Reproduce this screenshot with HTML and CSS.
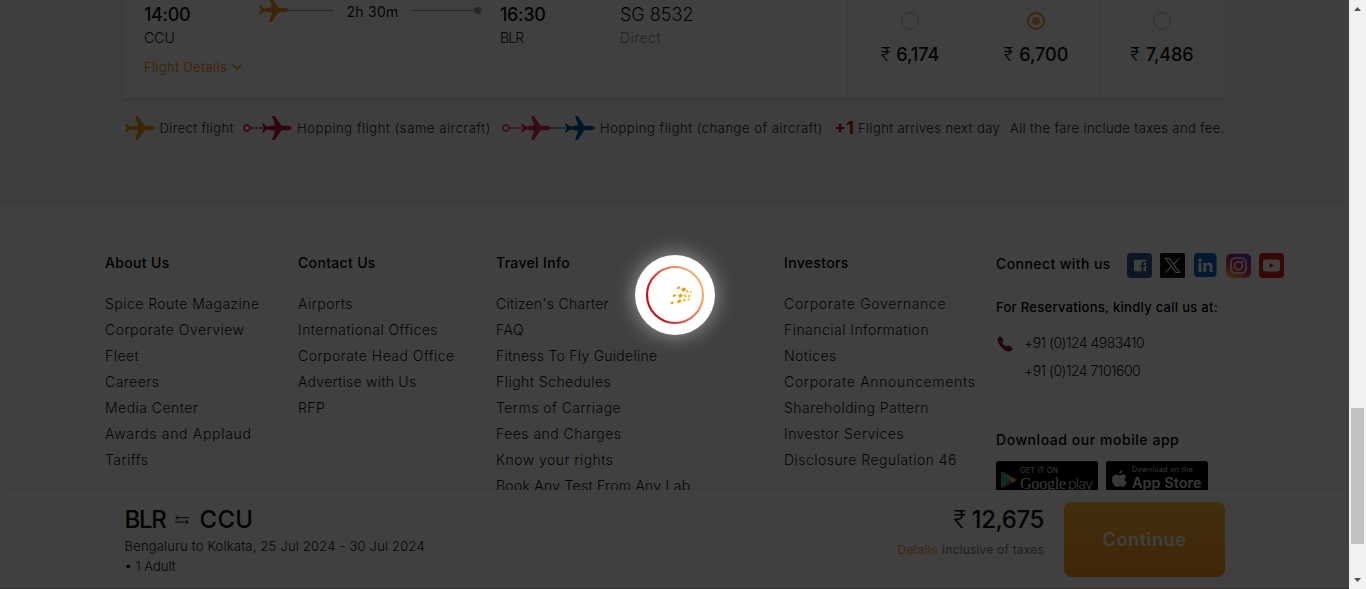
FILE: index.html
```html
<!DOCTYPE html>
<html lang="en">
<head>
<meta charset="utf-8">
<title>Select your flight</title>
<link rel="stylesheet" href="styles.css">
</head>
<body>
<svg class="defs" width="0" height="0">
  <defs>
    <symbol id="plane" viewBox="0 0 30 24"><path d="M30 12c0-1.100-2.500-2.300-5-2.300h-5.500L12.800 0h-2.700l3 9.200L5 10.500 1.500 7.500H0L1.600 12 0 16.500h1.500L5 13.500l8.100 1.300L10.100 24h2.700l6.700-9.700H25c2.500 0 5-1.200 5-2.300z"/></symbol>
  </defs>
</svg>
<div class="screen">
  <div class="page">
    <main class="results">
      <section class="card">
        <div class="leg">
          <div class="stop depart">
            <div class="time">14:00</div>
            <div class="code">CCU</div>
            <a class="details">Flight Details <svg width="10" height="6" viewBox="0 0 10 6"><path d="M.7.700 5 4.900 9.300.7" fill="none" stroke="currentColor" stroke-width="1.700"/></svg></a>
          </div>
          <div class="route">
            <svg class="orange" width="30" height="24"><use href="#plane"/></svg>
            <i class="line first"></i>
            <span class="duration">2h 30m</span>
            <i class="line last"></i>
            <i class="dot"></i>
          </div>
          <div class="stop arrive">
            <div class="time">16:30</div>
            <div class="code tight">BLR</div>
          </div>
          <div class="stop number">
            <div class="flightno">SG 8532</div>
            <div class="code muted">Direct</div>
          </div>
        </div>
        <div class="fares">
          <div class="fare"><i class="radio"></i><div class="amount"><span class="rupee">₹</span> 6,174</div></div>
          <div class="fare"><i class="radio on"></i><div class="amount"><span class="rupee">₹</span> 6,700</div></div>
          <div class="fare shaded"><i class="radio"></i><div class="amount"><span class="rupee">₹</span> 7,486</div></div>
        </div>
      </section>
      <div class="legend">
        <div class="key"><svg class="orange" width="30" height="24"><use href="#plane"/></svg><span>Direct flight</span></div>
        <div class="key wide"><svg width="49" height="24" viewBox="0 0 49 24"><g fill="none" stroke="#d7182a"><circle cx="4" cy="12" r="3" stroke-width="1.500"/><path d="M8 12h12" stroke-width="1.300" stroke-dasharray="3 1"/></g><use href="#plane" x="19" width="30" height="24" fill="#c8102e"/></svg><span>Hopping flight (same aircraft)</span></div>
        <div class="key wide"><svg width="93" height="24" viewBox="0 0 93 24"><g fill="none"><circle cx="4" cy="12" r="3" stroke="#d9475a" stroke-width="1.500"/><path d="M8 12h12" stroke="#d9475a" stroke-width="1.300" stroke-dasharray="3 1"/><path d="M48 12h18" stroke="#0068b5" stroke-width="1.500" stroke-dasharray="3 1"/></g><use href="#plane" x="19" width="30" height="24" fill="#cd3048"/><use href="#plane" x="63" width="30" height="24" fill="#005a9e"/></svg><span>Hopping flight (change of aircraft)</span></div>
        <div class="key"><b class="plus">+1</b><span>Flight arrives next day</span></div>
        <div class="key"><span>All the fare include taxes and fee.</span></div>
      </div>
    </main>
    <footer class="footer">
      <div class="col">
        <h3>About Us</h3>
        <a>Spice Route Magazine</a><a>Corporate Overview</a><a>Fleet</a><a>Careers</a><a>Media Center</a><a class="loose">Awards and Applaud</a><a>Tariffs</a>
      </div>
      <div class="col">
        <h3>Contact Us</h3>
        <a>Airports</a><a>International Offices</a><a>Corporate Head Office</a><a class="snug">Advertise with Us</a><a>RFP</a>
      </div>
      <div class="col">
        <h3>Travel Info</h3>
        <a class="snug">Citizen's Charter</a><a>FAQ</a><a class="snug">Fitness To Fly Guideline</a><a>Flight Schedules</a><a>Terms of Carriage</a><a>Fees and Charges</a><a>Know your rights</a><a class="snug">Book Any Test From Any Lab</a>
      </div>
      <div class="col">
        <h3>Investors</h3>
        <a class="loose">Corporate Governance</a><a>Financial Information</a><a>Notices</a><a class="loose">Corporate Announcements</a><a>Shareholding Pattern</a><a>Investor Services</a><a>Disclosure Regulation 46</a>
      </div>
      <div class="connect">
        <div class="social">
          <h3>Connect with us</h3>
          <svg width="25" height="25" viewBox="0 0 25 25"><rect width="25" height="25" rx="4" fill="#3b5998"/><path d="M7 6.800h12v11.400h-2.500v-4.300h1.500l.2-1.800h-1.700V11c0-.6.200-.9.900-.9h.9V8.400h-1.400c-1.600 0-2.300.9-2.300 2.300v1.400h-1.200v1.800h1.200v4.300H7z" fill="#fff"/></svg>
          <svg width="25" height="25" viewBox="0 0 25 25"><rect width="25" height="25" rx="1.500" fill="#111"/><path d="M5.500 5.500h3.700l10.500 14H16z M19 5.500l-5.900 6.400M5.500 19.500l6-6.500" fill="none" stroke="#fff" stroke-width="1.100"/></svg>
          <svg width="25" height="25" viewBox="0 0 25 25"><rect x="1" width="22.500" height="24" rx="4" fill="#0a66c2"/><path d="M5.500 9.800h3V19h-3zM10.300 9.800h2.900v1.300c.6-1 1.600-1.600 3-1.600 2.400 0 3.300 1.500 3.300 4V19h-3v-5c0-1.200-.3-2.100-1.500-2.100-1.300 0-1.700.9-1.700 2.100v5h-3z" fill="#fff"/><circle cx="7" cy="7.200" r="1.700" fill="#fff"/></svg>
          <svg width="25" height="25" viewBox="0 0 25 25"><defs><linearGradient id="ig" x1=".2" y1="1" x2=".7" y2="0"><stop offset="0" stop-color="#fdc050"/><stop offset=".4" stop-color="#e03c50"/><stop offset=".75" stop-color="#a0288e"/><stop offset="1" stop-color="#5b34d0"/></linearGradient></defs><rect y=".7" width="25" height="24.300" rx="5" fill="url(#ig)"/><g fill="none" stroke="#fff" stroke-width="1.500"><rect x="5" y="5" width="15" height="15" rx="4.500"/><circle cx="12.500" cy="12.700" r="4"/></g><circle cx="16.800" cy="8.400" r="1" fill="#fff"/></svg>
          <svg width="25" height="25" viewBox="0 0 25 25"><rect width="25" height="25" rx="4" fill="#d4201c"/><rect x="4" y="6.500" width="17" height="12" rx="3" fill="#fff"/><path d="m10.500 10 4.500 2.500-4.500 2.500z" fill="#d4201c"/></svg>
        </div>
        <h4>For Reservations, kindly call us at:</h4>
        <div class="phones">
          <svg width="16" height="16" viewBox="0 0 16 16"><path d="M1.700 1.800C2.800.7 4 .9 4.700 2l1 1.900c.4.800.1 1.500-.6 2.200-.4.400-.2.900.2 1.600.8 1.200 1.800 2.200 2.900 2.900.7.400 1.200.6 1.600.2.700-.7 1.500-.9 2.300-.5l2 1.100c1.100.7 1.200 1.900.1 2.800-1.900 1.600-4.800.8-8.200-2C2.700 9 .2 4.500 1.700 1.800z" fill="#c41218" stroke="#111" stroke-width="1"/></svg>
          <div><a>+91 (0)124 4983410</a><a>+91 (0)124 7101600</a></div>
        </div>
        <h3 class="apptitle">Download our mobile app</h3>
        <div class="stores">
          <div class="store">
            <svg width="16" height="18" viewBox="0 0 16 18"><path d="M0 0 9.500 9 0 18z" fill="#35a9a2"/><path d="m0 0 11.500 6.200L8.500 9z" fill="#6fc8a0"/><path d="M11.300 6.100 16 9l-4.700 2.900L8.500 9z" fill="#e5b35a"/><path d="m0 18 11.500-6.200L8.500 9z" fill="#b9405f"/></svg>
            <div><small class="caps">GET IT ON</small><div class="google"><b>Google</b><span>play</span></div></div>
          </div>
          <div class="store apple">
            <svg width="15" height="18" viewBox="0 0 15 18"><path d="M10.500 0c.1 2-1.500 3.700-3.200 3.700C7.100 1.900 8.800.2 10.500 0zM14.300 6.200c-2.500 1.500-2 4.800.6 5.900-.7 2-2.100 4.900-3.900 4.900-1.200 0-1.700-.7-3.100-.7s-2 .7-3.100.7C2.500 17 0 13 0 9.700c0-3.100 2-5.100 4.200-5.100 1.400 0 2.500.9 3.400.9.900 0 2.100-1 3.900-.9 1.200.1 2.200.6 2.800 1.600z" fill="#ddd"/></svg>
            <div><small>Download on the</small><b>App Store</b></div>
          </div>
        </div>
      </div>
    </footer>
    <div class="bookbar">
      <div class="trip">
        <div class="cities"><span class="blr">BLR</span><svg width="14" height="10" viewBox="0 0 14 10"><path d="M14 2.700H.8M3.200.5.800 2.700l2.400 2M0 7h13.200M10.800 5l2.400 2-2.400 2.200" fill="none" stroke="#111"/></svg><span>CCU</span></div>
        <div class="dates">Bengaluru to Kolkata, 25 Jul 2024 - 30 Jul 2024</div>
        <div class="dates pax">• 1 Adult</div>
      </div>
      <div class="total">
        <div class="sum"><span class="rupee">₹</span> 12,675</div>
        <div class="note"><a>Details</a> inclusive of taxes</div>
      </div>
      <button class="continue">Continue</button>
    </div>
    <div class="veil"></div>
    <div class="loader">
      <svg width="80" height="80" viewBox="0 0 80 80"><defs><linearGradient id="ring" x1="0" y1=".75" x2="1" y2=".25"><stop offset=".15" stop-color="#c4131c"/><stop offset=".5" stop-color="#e06a4a"/><stop offset="1" stop-color="#f6bd78"/></linearGradient></defs><circle cx="40" cy="40" r="28" fill="none" stroke="url(#ring)" stroke-width="2.200"/>
      <g fill="#f39a14"><ellipse cx="43.500" cy="32.800" rx="1.700" ry="1.200" transform="rotate(-35 43.500 32.800)"/><ellipse cx="48.700" cy="34.500" rx="2.300" ry="1.700" transform="rotate(-35 48.700 34.500)"/><ellipse cx="39.300" cy="40.500" rx="1.700" ry="1.200" transform="rotate(-35 39.300 40.500)"/><ellipse cx="45.500" cy="40.700" rx="2.200" ry="1.700" transform="rotate(-35 45.500 40.700)"/><ellipse cx="37.200" cy="47.800" rx="1.600" ry="1.200" transform="rotate(-35 37.200 47.800)"/><ellipse cx="44.200" cy="46.300" rx="2.200" ry="1.600" transform="rotate(-35 44.200 46.300)"/></g>
      <g fill="#f6c01d"><circle cx="52.300" cy="36.300" r="1.300"/><circle cx="56" cy="37" r="1.100"/><circle cx="50.200" cy="41" r="1.400"/><circle cx="54.200" cy="41" r="1.200"/><circle cx="49.300" cy="45" r="1.300"/><circle cx="53.600" cy="44.400" r="1.100"/></g></svg>
    </div>
  </div>
  <div class="scrollbar">
    <svg width="17" height="17"><path d="M5 11h7l-3.500-4z" fill="#505050"/></svg>
    <i class="thumb"></i>
    <svg width="17" height="17"><path d="M5 6h7l-3.500 4z" fill="#505050"/></svg>
  </div>
</div>
</body>
</html>
```
FILE: styles.css
```css
* { box-sizing: border-box; }
body { margin: 0; font-family: Inter, "Liberation Sans", sans-serif; color: #111; font-size: 14px; }
h3, h4 { margin: 0; font-size: 14px; font-weight: 500; color: #000; }
i { display: block; flex: none; }
svg { flex: none; display: block; }
.defs { position: absolute; }
.screen { display: flex; width: 1366px; height: 589px; overflow: hidden; }
.page { position: relative; width: 1349px; height: 589px; overflow: hidden; background: #fff; }

/* flight results */
.results { height: 204px; background: #f8f8f8; }
.card { display: flex; width: 1101px; height: 98px; margin-left: 124px; background: #fff; box-shadow: 0 2px 4px rgba(0, 0, 0, .13); }
.leg { display: flex; flex: 1; padding-left: 20px; }
.stop { padding-top: 2px; }
.depart { width: 115px; }
.arrive { width: 120px; }
.time { font-size: 18px; font-weight: 500; line-height: 25px; letter-spacing: -.35px; }
.flightno { font-size: 18px; font-weight: 300; line-height: 25px; }
.code { font-weight: 300; line-height: 22px; letter-spacing: .1px; }
.tight { letter-spacing: -.9px; }
.muted { color: #868686; letter-spacing: .5px; }
.details { display: flex; align-items: center; gap: 5px; margin-top: 6px; font-size: 13px; line-height: 24px; letter-spacing: .27px; color: #f5971f; white-space: nowrap; }
.orange { fill: #f2961f; }
.route { display: flex; align-items: center; width: 241px; height: 24px; margin-top: -2px; }
.line { height: 1px; background: #a0a0a0; }
.first { width: 45px; }
.duration { width: 77px; padding-top: 2px; text-align: center; letter-spacing: .25px; }
.last { width: 63px; }
.dot { width: 7px; height: 7px; border-radius: 50%; background: #9a9a9a; }
.fares { display: flex; }
.fare { display: flex; flex-direction: column; align-items: center; width: 126px; padding: 12px 1px 0 0; border-left: 1px solid #f0f0f0; }
.shaded { background: #fdfdfd; }
.radio { width: 18px; height: 18px; border: 1.500px solid #c4c4c4; border-radius: 50%; }
.radio.on { border: 2px solid #f5971f; background: radial-gradient(circle, #e2a55a 3.500px, transparent 4.500px); }
.amount { padding-top: 12px; font-size: 18px; font-weight: 500; line-height: 25px; letter-spacing: -.05px; white-space: nowrap; }
.rupee { font-weight: 300; margin-right: 1.500px; }

/* legend */
.legend { display: grid; grid-template-columns: 118px 259px 332px 176px 215px; margin: 17px 0 0 125px; font-size: 13px; font-weight: 300; letter-spacing: .4px; line-height: 24px; white-space: nowrap; }
.key { display: flex; align-items: center; gap: 4.500px; }
.key svg { margin-top: 1px; }
.wide { gap: 5px; letter-spacing: .6px; }
.wide + .wide { letter-spacing: .54px; }
.plus { width: 19.500px; font-size: 18px; font-weight: 700; letter-spacing: 0; color: #c40d1e; }

/* footer */
.footer { display: grid; grid-template-columns: 193px 198px 288px 212px 300px; height: 400px; padding: 46px 0 0 105px; }
.col h3 { margin-bottom: 15px; line-height: 26px; letter-spacing: .33px; }
.col a { display: block; font-weight: 300; line-height: 26px; letter-spacing: .46px; white-space: nowrap; }
.col .loose { letter-spacing: .69px; }
.col .snug { letter-spacing: .26px; }
.social { display: flex; gap: 8px; height: 28px; align-items: center; padding-top: 2px; }
.social h3 { width: 123px; margin-top: -4px; letter-spacing: .42px; white-space: nowrap; }
.connect h4 { margin-top: 18px; font-size: 13px; line-height: 23px; letter-spacing: .29px; }
.phones { display: flex; gap: 11px; margin: 10px 0 0 1px; }
.phones svg { margin-top: 7px; }
.phones a { display: block; line-height: 28px; font-weight: 300; letter-spacing: -.5px; }
.apptitle { margin-top: 43px; line-height: 24px; letter-spacing: .55px; }
.stores { display: flex; gap: 8px; margin-top: 9px; color: #ddd; }
.store { display: flex; gap: 3px; width: 102px; height: 34px; padding-left: 5px; border-radius: 3px; background: #000; white-space: nowrap; }
.store svg { margin-top: 10px; }
.store small { display: block; height: 13px; padding-top: 3px; font-size: 7px; line-height: 11px; letter-spacing: .35px; }
.store .caps { padding-top: 4px; font-size: 7.500px; letter-spacing: .1px; }
.store b { display: block; font-size: 14.500px; line-height: 17px; font-weight: 600; letter-spacing: 0; }
.google { display: flex; gap: 2px; padding-top: 1px; line-height: 17px; }
.google b { font-family: "Liberation Serif", serif; font-size: 16px; font-weight: 400; letter-spacing: -.2px; }
.google span { font-size: 14px; font-weight: 300; letter-spacing: -.6px; }
.apple { padding-left: 6px; gap: 5px; }
.apple svg { margin-top: 9px; }

/* booking bar pinned to the bottom */
.bookbar { position: absolute; left: 0; right: 0; bottom: 0; display: flex; height: 99px; padding: 12px 124px 0 124.500px; background: #fff; border-bottom: 1px solid #d8ccd4; box-shadow: 0 0 8px rgba(0, 0, 0, .12); }
.trip { flex: 1; }
.cities { display: flex; align-items: center; font-size: 24px; font-weight: 500; line-height: 35px; letter-spacing: .3px; }
.cities svg { margin: 0 10px; }
.blr { letter-spacing: -1.300px; }
.dates { margin-top: -1px; font-size: 13px; font-weight: 300; line-height: 21px; letter-spacing: .2px; }
.pax { letter-spacing: 0; }
.total { text-align: right; margin-right: 20px; }
.sum { font-size: 24px; font-weight: 500; line-height: 36px; letter-spacing: -.4px; }
.sum .rupee { margin-right: 0; }
.note { font-size: 12px; line-height: 24px; letter-spacing: .2px; color: #777; }
.note a { color: #f5971f; margin-right: 1px; }
.continue { width: 161px; height: 75px; padding: 0; border: 0; border-radius: 8px; background: linear-gradient(#ffb838, #fd981e); color: #fff; font: 600 18px Inter, sans-serif; letter-spacing: .6px; }

/* dimming layer and spinner */
.veil { position: absolute; inset: 0; background: rgba(0, 0, 0, .75); }
.loader { position: absolute; left: 635px; top: 255px; width: 80px; height: 80px; border-radius: 50%; background: #fff; box-shadow: 0 0 20px rgba(255, 255, 255, .5); }

.scrollbar { display: flex; flex-direction: column; width: 17px; height: 589px; background: #f1f1f1; }
.thumb { width: 13px; height: 136px; margin: 391px 2px 28px; background: #c1c1c1; }
```
